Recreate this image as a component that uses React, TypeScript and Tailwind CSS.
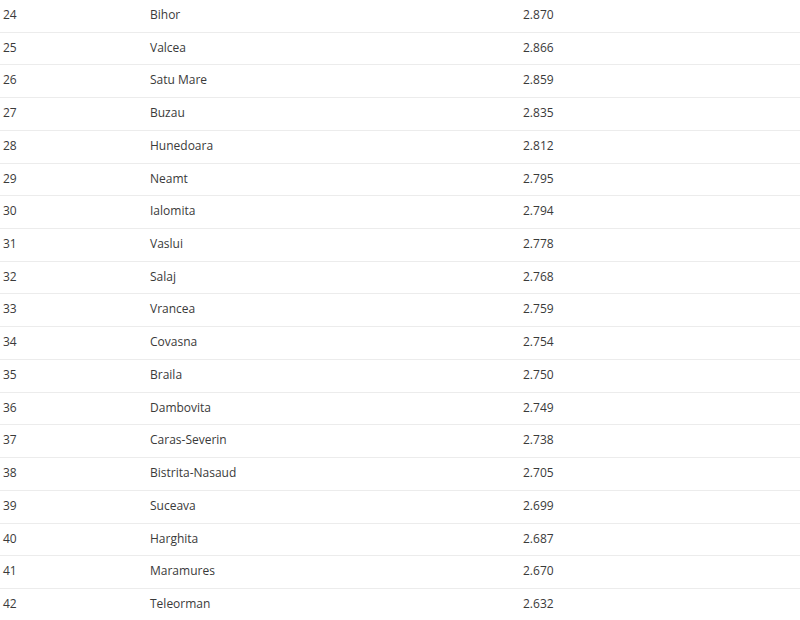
import React from "react";

const rows: [number, string, string][] = [
  [24, "Bihor", "2.870"],
  [25, "Valcea", "2.866"],
  [26, "Satu Mare", "2.859"],
  [27, "Buzau", "2.835"],
  [28, "Hunedoara", "2.812"],
  [29, "Neamt", "2.795"],
  [30, "Ialomita", "2.794"],
  [31, "Vaslui", "2.778"],
  [32, "Salaj", "2.768"],
  [33, "Vrancea", "2.759"],
  [34, "Covasna", "2.754"],
  [35, "Braila", "2.750"],
  [36, "Dambovita", "2.749"],
  [37, "Caras-Severin", "2.738"],
  [38, "Bistrita-Nasaud", "2.705"],
  [39, "Suceava", "2.699"],
  [40, "Harghita", "2.687"],
  [41, "Maramures", "2.670"],
  [42, "Teleorman", "2.632"],
];

export default function App() {
  return (
    <div
      className="w-[800px] h-[620px] overflow-hidden bg-white text-[#3a3a3a] text-[12px] leading-[20px]"
      style={{ fontFamily: '"Open Sans", "Noto Sans", sans-serif' }}
    >
      <div className="flex flex-col">
        {rows.map(([n, name, v], i) => (
          <div
            key={n}
            className={`flex h-[32.72px] shrink-0 items-start pt-[5px] ${
              i < rows.length - 1 ? "border-b border-[#ececec]" : ""
            }`}
          >
            <div className="w-[150px] pl-[3px]">{n}</div>
            <div className="w-[373px]">{name}</div>
            <div className="flex-1">{v}</div>
          </div>
        ))}
      </div>
    </div>
  );
}
